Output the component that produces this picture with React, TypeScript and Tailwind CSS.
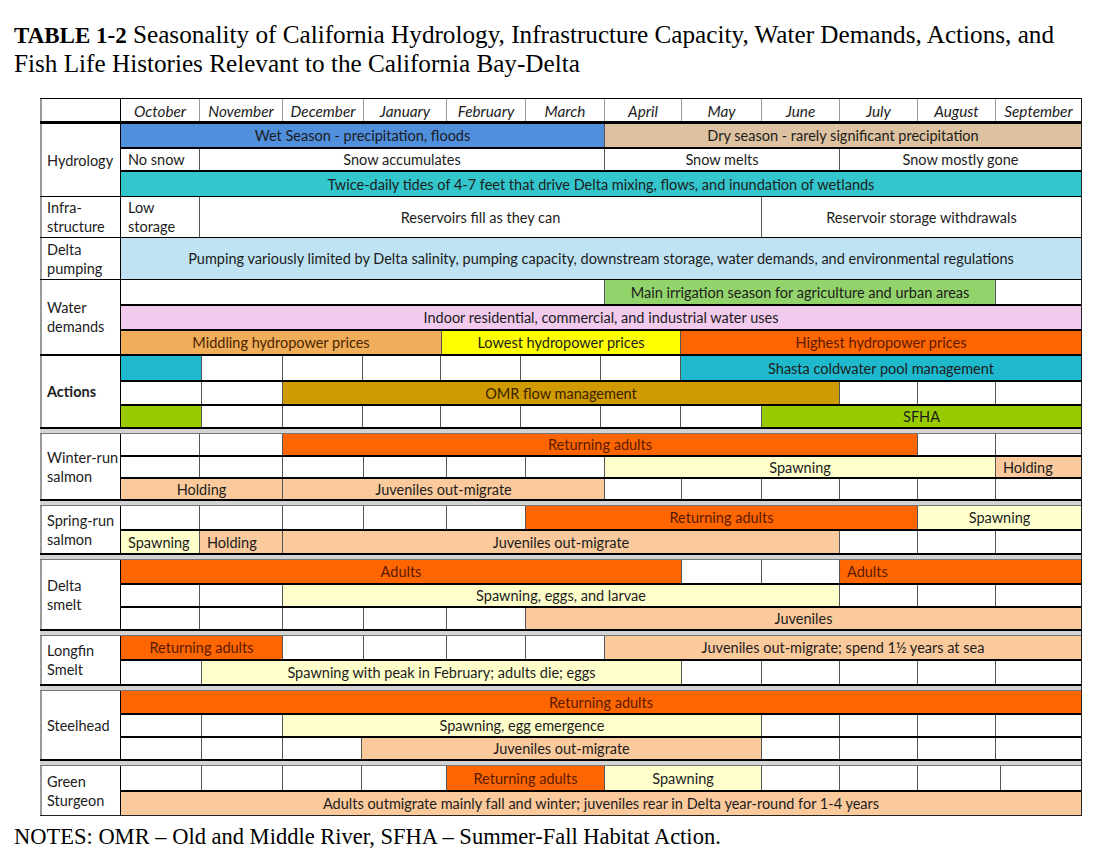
import React from 'react';

type Seg = { to: number; bg?: string; text?: string; left?: boolean; tc?: string };
type Band = { h: string; segs: Seg[] };
type Group = { label: string[]; bold?: boolean; bands: Band[] };

const ORANGE = 'bg-[#ff6600]';
const PEACH = 'bg-[#fbca9c]';
const LY = 'bg-[#ffffcc]';
const DARK = 'text-[#5a1a00]';

// blank cells ending at the given x positions
const blanks = (...xs: number[]): Seg[] => xs.map((to) => ({ to }));

const months = [
  ['October', 199],
  ['November', 282],
  ['December', 363],
  ['January', 446],
  ['February', 525],
  ['March', 604],
  ['April', 681],
  ['May', 761],
  ['June', 839],
  ['July', 917],
  ['August', 995],
  ['September', 1081],
] as const;

const topGroups: Group[] = [
  {
    label: ['Hydrology'],
    bands: [
      {
        h: 'h-[23px]',
        segs: [
          { to: 604, bg: 'bg-[#4f8fdc]', text: 'Wet Season - precipitation, floods' },
          { to: 1081, bg: 'bg-[#dcc2a0]', text: 'Dry season - rarely significant precipitation' },
        ],
      },
      {
        h: 'h-[23px]',
        segs: [
          { to: 199, text: 'No snow', left: true },
          { to: 604, text: 'Snow accumulates' },
          { to: 839, text: 'Snow melts' },
          { to: 1081, text: 'Snow mostly gone' },
        ],
      },
      {
        h: 'h-[26px]',
        segs: [
          {
            to: 1081,
            bg: 'bg-[#33c6cc]',
            text: 'Twice-daily tides of 4-7 feet that drive Delta mixing, flows, and inundation of wetlands',
          },
        ],
      },
    ],
  },
  {
    label: ['Infra-', 'structure'],
    bands: [
      {
        h: 'h-[40px]',
        segs: [
          { to: 199, text: 'Low\nstorage', left: true },
          { to: 761, text: 'Reservoirs fill as they can' },
          { to: 1081, text: 'Reservoir storage withdrawals' },
        ],
      },
    ],
  },
  {
    label: ['Delta', 'pumping'],
    bands: [
      {
        h: 'h-[41px]',
        segs: [
          {
            to: 1081,
            bg: 'bg-[#bfe3f3]',
            text: 'Pumping variously limited by Delta salinity, pumping capacity, downstream storage, water demands, and environmental regulations',
          },
        ],
      },
    ],
  },
  {
    label: ['Water', 'demands'],
    bands: [
      {
        h: 'h-[24px]',
        segs: [
          { to: 604 },
          { to: 995, bg: 'bg-[#93d36b]', text: 'Main irrigation season for agriculture and urban areas' },
          { to: 1081 },
        ],
      },
      {
        h: 'h-[25px]',
        segs: [{ to: 1081, bg: 'bg-[#f2caee]', text: 'Indoor residential, commercial, and industrial water uses' }],
      },
      {
        h: 'h-[25px]',
        segs: [
          { to: 441, bg: 'bg-[#f0ae5a]', text: 'Middling hydropower prices', tc: 'text-[#4a2500]' },
          { to: 680, bg: 'bg-[#ffff00]', text: 'Lowest hydropower prices' },
          { to: 1081, bg: ORANGE, text: 'Highest hydropower prices', tc: DARK },
        ],
      },
    ],
  },
  {
    label: ['Actions'],
    bold: true,
    bands: [
      {
        h: 'h-[24px]',
        segs: [
          { to: 201, bg: 'bg-[#1eb9cd]' },
          ...blanks(282, 362, 440, 520, 600, 680),
          { to: 1081, bg: 'bg-[#1eb9cd]', text: 'Shasta coldwater pool management' },
        ],
      },
      {
        h: 'h-[24px]',
        segs: [
          ...blanks(201, 282),
          { to: 839, bg: 'bg-[#d09b00]', text: 'OMR flow management', tc: 'text-[#3a2200]' },
          ...blanks(917, 995, 1081),
        ],
      },
      {
        h: 'h-[23px]',
        segs: [
          { to: 201, bg: 'bg-[#99cc00]' },
          ...blanks(282, 362, 440, 520, 600, 680, 761),
          { to: 1081, bg: 'bg-[#99cc00]', text: 'SFHA' },
        ],
      },
    ],
  },
];

const fishGroups: Group[] = [
  {
    label: ['Winter-run', 'salmon'],
    bands: [
      {
        h: 'h-[21px]',
        segs: [...blanks(199, 282), { to: 917, bg: ORANGE, text: 'Returning adults', tc: DARK }, ...blanks(995, 1081)],
      },
      {
        h: 'h-[22px]',
        segs: [
          ...blanks(199, 282, 363, 446, 525, 604),
          { to: 995, bg: LY, text: 'Spawning' },
          { to: 1081, bg: PEACH, text: 'Holding', left: true },
        ],
      },
      {
        h: 'h-[22px]',
        segs: [
          { to: 282, bg: PEACH, text: 'Holding' },
          { to: 604, bg: PEACH, text: 'Juveniles out-migrate' },
          ...blanks(681, 761, 839, 917, 995, 1081),
        ],
      },
    ],
  },
  {
    label: ['Spring-run', 'salmon'],
    bands: [
      {
        h: 'h-[23px]',
        segs: [
          ...blanks(199, 282, 363, 446, 525),
          { to: 917, bg: ORANGE, text: 'Returning adults', tc: DARK },
          { to: 1081, bg: LY, text: 'Spawning' },
        ],
      },
      {
        h: 'h-[24px]',
        segs: [
          { to: 199, bg: LY, text: 'Spawning', left: true },
          { to: 282, bg: PEACH, text: 'Holding', left: true },
          { to: 839, bg: PEACH, text: 'Juveniles out-migrate' },
          ...blanks(917, 995, 1081),
        ],
      },
    ],
  },
  {
    label: ['Delta', 'smelt'],
    bands: [
      {
        h: 'h-[23px]',
        segs: [
          { to: 681, bg: ORANGE, text: 'Adults', tc: DARK },
          ...blanks(761, 839),
          { to: 1081, bg: ORANGE, text: 'Adults', left: true, tc: DARK },
        ],
      },
      {
        h: 'h-[23px]',
        segs: [...blanks(199, 282), { to: 839, bg: LY, text: 'Spawning, eggs, and larvae' }, ...blanks(917, 995, 1081)],
      },
      {
        h: 'h-[23px]',
        segs: [...blanks(199, 282, 363, 446, 525), { to: 1081, bg: PEACH, text: 'Juveniles' }],
      },
    ],
  },
  {
    label: ['Longfin', 'Smelt'],
    bands: [
      {
        h: 'h-[23px]',
        segs: [
          { to: 282, bg: ORANGE, text: 'Returning adults', tc: DARK },
          ...blanks(363, 446, 525, 604),
          { to: 1081, bg: PEACH, text: 'Juveniles out-migrate; spend 1½ years at sea' },
        ],
      },
      {
        h: 'h-[25px]',
        segs: [
          ...blanks(201),
          { to: 681, bg: LY, text: 'Spawning with peak in February; adults die; eggs' },
          ...blanks(761, 839, 917, 995, 1081),
        ],
      },
    ],
  },
  {
    label: ['Steelhead'],
    bands: [
      {
        h: 'h-[22px]',
        segs: [{ to: 1081, bg: ORANGE, text: 'Returning adults', tc: DARK }],
      },
      {
        h: 'h-[23px]',
        segs: [...blanks(201, 282), { to: 761, bg: LY, text: 'Spawning, egg emergence' }, ...blanks(839, 917, 995, 1081)],
      },
      {
        h: 'h-[23px]',
        segs: [
          ...blanks(201, 282, 361),
          { to: 761, bg: PEACH, text: 'Juveniles out-migrate' },
          ...blanks(839, 917, 995, 1081),
        ],
      },
    ],
  },
  {
    label: ['Green', 'Sturgeon'],
    bands: [
      {
        h: 'h-[24px]',
        segs: [
          ...blanks(201, 282, 361, 446),
          { to: 604, bg: ORANGE, text: 'Returning adults', tc: DARK },
          { to: 761, bg: LY, text: 'Spawning' },
          ...blanks(839, 917, 1000, 1081),
        ],
      },
      {
        h: 'h-[25px]',
        segs: [
          {
            to: 1081,
            bg: PEACH,
            text: 'Adults outmigrate mainly fall and winter; juveniles rear in Delta year-round for 1-4 years',
          },
        ],
      },
    ],
  },
];

const BandRow: React.FC<{ band: Band; first: boolean }> = ({ band, first }) => {
  let x = 121;
  return (
    <div className={`flex ${band.h} ${first ? '' : 'border-t-2 border-black'}`}>
      {band.segs.map((s, i) => {
        const w = s.to - x;
        x = s.to;
        return (
          <div
            key={i}
            style={{ width: w }}
            className={`flex h-full shrink-0 items-center whitespace-pre leading-[19px] ${s.bg ?? 'bg-white'} ${
              s.tc ?? 'text-[#1c1c1c]'
            } ${i > 0 ? 'border-l border-[#555]' : ''} ${s.left ? 'justify-start pl-[7px]' : 'justify-center text-center'}`}
          >
            {s.text}
          </div>
        );
      })}
    </div>
  );
};

const GroupRow: React.FC<{ group: Group }> = ({ group }) => (
  <div className="flex">
    <div
      className={`flex w-[81px] shrink-0 flex-col justify-center border-r border-l-2 border-r-black border-l-[#9a9a9a] pl-[5px] leading-[19px] text-[#1c1c1c] ${
        group.bold ? 'font-bold' : ''
      }`}
    >
      {group.label.map((l) => (
        <span key={l}>{l}</span>
      ))}
    </div>
    <div className="flex w-[960px] flex-col">
      {group.bands.map((b, i) => (
        <BandRow key={i} band={b} first={i === 0} />
      ))}
    </div>
  </div>
);

const Separator = () => <div className="h-[7px] border-t-2 border-b border-t-black border-b-[#777] bg-[#d3d3d3]" />;

export default function App() {
  return (
    <div className="h-[866px] w-[1109px] overflow-hidden bg-white">
      <div className="pl-[14px] pt-[21px] font-['Liberation_Serif',serif] text-[25.2px] leading-[28px] text-black">
        <b className="text-[23px]">TABLE 1-2</b> Seasonality of California Hydrology, Infrastructure Capacity, Water
        Demands, Actions, and
        <br />
        Fish Life Histories Relevant to the California Bay-Delta
      </div>

      <div className="ml-[40px] mt-[20px] w-[1042px] border-r border-b border-[#222] font-['Lato',sans-serif] text-[14.5px]">
        {/* Month header */}
        <div className="flex h-[26px] border-t border-b-[3px] border-t-black border-b-black">
          <div className="w-[81px] shrink-0 border-l-2 border-r border-l-[#9a9a9a] border-r-black" />
          {months.map(([m, to], i) => {
            const from = i === 0 ? 121 : months[i - 1][1];
            return (
              <div
                key={m}
                style={{ width: to - from }}
                className={`flex shrink-0 items-center justify-center pt-[2px] text-[15.3px] italic text-[#1c1c1c] ${
                  i > 0 ? 'border-l border-[#999]' : ''
                }`}
              >
                {m}
              </div>
            );
          })}
        </div>

        {topGroups.map((g, i) => (
          <React.Fragment key={g.label[0]}>
            {i > 0 && <div className={i === 4 ? 'h-[2px] bg-black' : 'h-px bg-black'} />}
            <GroupRow group={g} />
          </React.Fragment>
        ))}

        {fishGroups.map((g) => (
          <React.Fragment key={g.label[0] + g.label[1]}>
            <Separator />
            <GroupRow group={g} />
          </React.Fragment>
        ))}
      </div>

      <div className="mt-[8px] pl-[14px] font-['Liberation_Serif',serif] text-[22.5px] leading-[26px] text-black">
        NOTES: OMR – Old and Middle River, SFHA – Summer-Fall Habitat Action.
      </div>
    </div>
  );
}
